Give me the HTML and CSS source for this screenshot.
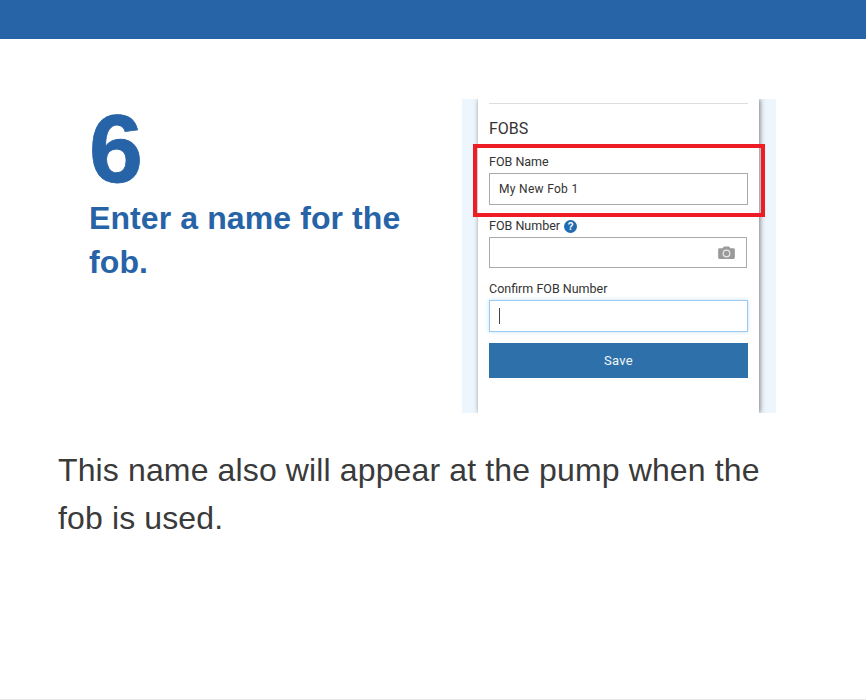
FILE: index.html
```html
<!DOCTYPE html>
<html lang="en">
<head>
  <meta charset="UTF-8">
  <meta name="viewport" content="width=device-width, initial-scale=1.0">
  <title>Add a fob</title>
  <link rel="stylesheet" href="styles.css">
</head>
<body>
  <div class="top-bar"></div>

  <div class="content">
    <div class="step">
      <div class="step-text">
        <div class="step-number">6</div>
        <h2 class="step-title">Enter a name for the fob.</h2>
      </div>

      <!-- picture of the app form -->
      <div class="shot">
        <div class="panel">
          <div class="divider"></div>
          <div class="panel-title">FOBS</div>

          <div class="label first">FOB Name</div>
          <div class="field">My New Fob 1</div>

          <div class="label second">FOB Number
            <svg class="help" width="13" height="13" viewBox="0 0 13 13">
              <circle cx="6.5" cy="6.5" r="6.5" fill="#1f6cb0"/>
              <text x="6.5" y="10" text-anchor="middle" class="help-mark">?</text>
            </svg>
          </div>
          <div class="field short">
            <svg class="camera" width="17" height="13" viewBox="0 0 18 14">
              <path d="M1.5 2.5H5L6.2 .5H11.8L13 2.5H16.5A1.5 1.5 0 0 1 18 4V12.5A1.5 1.5 0 0 1 16.5 14H1.5A1.5 1.5 0 0 1 0 12.5V4A1.5 1.5 0 0 1 1.5 2.5Z" fill="#9a9a9a"/>
              <circle cx="9" cy="8" r="3.6" fill="none" stroke="#e8e8e8" stroke-width="1.3"/>
            </svg>
          </div>

          <div class="label third">Confirm FOB Number</div>
          <div class="field focus"><span class="caret"></span></div>

          <div class="save">Save</div>
        </div>
        <div class="highlight"></div>
      </div>
    </div>

    <p class="note">This name also will appear at the pump when the fob is used.</p>
  </div>
</body>
</html>
```

FILE: styles.css
```css
body {
  margin: 0;
  height: 700px;
  overflow: hidden;
  box-sizing: border-box;
  border-bottom: 1px solid #e8e8e8;
  background: #fff;
  font-family: "Liberation Sans", Arial, sans-serif;
  color: #333;
}
.top-bar {
  height: 39px;
  background: #2763a7;
}
.content {
  padding: 60px 58px 0;
}
.step {
  display: flex;
  justify-content: space-between;
  margin-right: 32px;
}
.step-text {
  width: 330px;
  margin-left: 31px;
}
.step-number {
  padding-top: 2px;
  font-size: 97px;
  font-weight: bold;
  line-height: 95px;
  color: #2763a7;
  -webkit-text-stroke: .8px #2763a7;
}
.step-title {
  margin: 0;
  font-size: 32px;
  line-height: 44px;
  letter-spacing: .1px;
  font-weight: bold;
  color: #2763a7;
}
.shot {
  position: relative;
  width: 314px;
  height: 314px;
  overflow: hidden;
  background: #eef6fd;
  font-family: Roboto, sans-serif;
  color: #333;
}
.panel {
  box-sizing: border-box;
  width: 281px;
  height: 314px;
  margin-left: 16px;
  padding: 4px 11px 0;
  background: #fff;
  box-shadow: 1px 0 5px #777;
}
.divider {
  height: 1px;
  background: #ddd;
}
.panel-title {
  margin-top: 16px;
  font-size: 16px;
  line-height: 18px;
}
.label {
  font-size: 12.5px;
  line-height: 14px;
}
.label.first {
  margin-top: 17px;
}
.label.second {
  margin-top: 14px;
  display: flex;
  align-items: center;
  gap: 4px;
}
.label.third {
  margin-top: 14px;
}
.help-mark {
  font-family: "Liberation Sans", sans-serif;
  font-size: 10px;
  font-weight: bold;
  fill: #fff;
}
.field {
  box-sizing: border-box;
  height: 32px;
  margin-top: 4px;
  padding-left: 9px;
  border: 1px solid #aaa;
  font-size: 12px;
  line-height: 30px;
  letter-spacing: .3px;
}
.field.short {
  width: 258px;
  height: 31px;
  display: flex;
  justify-content: flex-end;
  align-items: center;
  padding-right: 11px;
}
.field.focus {
  border-color: #9cc9ef;
  box-shadow: 0 0 4px #c4e0f7;
  display: flex;
  align-items: center;
}
.caret {
  width: 1px;
  height: 16px;
  background: #444;
}
.save {
  height: 35px;
  margin-top: 11px;
  background: #2e71aa;
  color: #f2f6fa;
  font-size: 13px;
  line-height: 35px;
  text-align: center;
  letter-spacing: .3px;
}
.highlight {
  position: absolute;
  left: 11px;
  top: 45px;
  width: 284px;
  height: 65px;
  border: 4px solid #ee1c25;
}
.note {
  max-width: 720px;
  margin: 33px 0 0;
  font-size: 32px;
  line-height: 48px;
  letter-spacing: .13px;
  color: #3a3a3a;
}
```
